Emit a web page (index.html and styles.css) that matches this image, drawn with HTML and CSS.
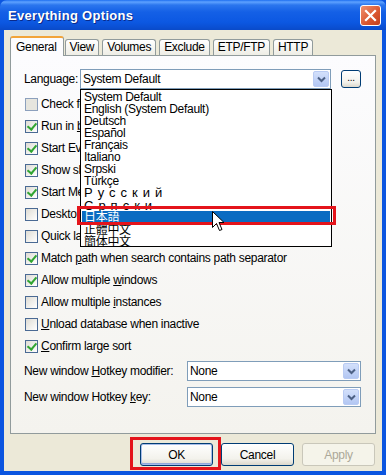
FILE: index.html
```html
<!DOCTYPE html>
<html lang="en">

<head>
    <meta charset="UTF-8">
    <meta name="viewport" content="width=device-width, initial-scale=1.0">
    <title>Everything Options</title>
    <link rel="stylesheet" href="styles.css">
</head>

<body>
    <div class="window">
        <div class="titlebar">
            <span class="title">Everything Options</span>
            <div class="close-btn">
                <svg width="13" height="13" viewBox="0 0 13 13">
                    <path d="M2 2 L11 11 M11 2 L2 11" stroke="#fff" stroke-width="2.2" stroke-linecap="square" />
                </svg>
            </div>
        </div>

        <div class="dialog">
            <div class="tabs">
                <div class="tab active">General</div>
                <div class="tab">View</div>
                <div class="tab">Volumes</div>
                <div class="tab">Exclude</div>
                <div class="tab">ETP/FTP</div>
                <div class="tab">HTTP</div>
            </div>

            <div class="panel">
                <div class="lang-row">
                    <span class="lang-label">Language:</span>
                    <div class="combo lang-combo">
                        <span class="combo-text">System Default</span>
                        <span class="combo-arrow">
                            <svg width="9" height="7" viewBox="0 0 9 7">
                                <path d="M1 1.5 L4.5 5 L8 1.5" fill="none" stroke="#4d6185" stroke-width="2" />
                            </svg>
                        </span>
                        <ul class="dropdown-list">
                            <li>System Default</li>
                            <li>English (System Default)</li>
                            <li>Deutsch</li>
                            <li>Español</li>
                            <li>Français</li>
                            <li>Italiano</li>
                            <li>Srpski</li>
                            <li>Türkçe</li>
                            <li class="wide">Русский</li>
                            <li class="wide clipped">Српски</li>
                            <li class="selected">日本語</li>
                            <li>正體中文</li>
                            <li>簡体中文</li>
                        </ul>
                    </div>
                    <div class="btn dots-btn">...</div>
                </div>

                <div class="options">
                    <div class="check-row"><span class="checkbox dim"></span><span>Check for updates on startup</span></div>
                    <div class="check-row"><span class="checkbox checked"></span><span>Run in <u>b</u>ackground</span></div>
                    <div class="check-row"><span class="checkbox checked"></span><span>Start Everything on system startup</span></div>
                    <div class="check-row"><span class="checkbox checked"></span><span>Show shortcut in tray</span></div>
                    <div class="check-row"><span class="checkbox checked"></span><span>Start Menu shortcuts</span></div>
                    <div class="check-row"><span class="checkbox"></span><span>Desktop shortcut</span></div>
                    <div class="check-row"><span class="checkbox"></span><span>Quick launch shortcut</span></div>
                    <div class="check-row"><span class="checkbox checked"></span><span>Match <u>p</u>ath when search contains path separator</span></div>
                    <div class="check-row"><span class="checkbox checked"></span><span>Allow multiple <u>w</u>indows</span></div>
                    <div class="check-row"><span class="checkbox"></span><span>Allow multiple <u>i</u>nstances</span></div>
                    <div class="check-row"><span class="checkbox"></span><span><u>U</u>nload database when inactive</span></div>
                    <div class="check-row"><span class="checkbox checked"></span><span><u>C</u>onfirm large sort</span></div>
                </div>

                <div class="hotkey-row">
                    <span class="hotkey-label">New window <u>H</u>otkey modifier:</span>
                    <div class="combo hotkey-combo">
                        <span class="combo-text">None</span>
                        <span class="combo-arrow">
                            <svg width="9" height="7" viewBox="0 0 9 7">
                                <path d="M1 1.5 L4.5 5 L8 1.5" fill="none" stroke="#4d6185" stroke-width="2" />
                            </svg>
                        </span>
                    </div>
                </div>
                <div class="hotkey-row">
                    <span class="hotkey-label">New window Hotkey <u>k</u>ey:</span>
                    <div class="combo hotkey-combo">
                        <span class="combo-text">None</span>
                        <span class="combo-arrow">
                            <svg width="9" height="7" viewBox="0 0 9 7">
                                <path d="M1 1.5 L4.5 5 L8 1.5" fill="none" stroke="#4d6185" stroke-width="2" />
                            </svg>
                        </span>
                    </div>
                </div>
            </div>

            <div class="buttons">
                <div class="btn default-btn">OK</div>
                <div class="btn">Cancel</div>
                <div class="btn disabled">Apply</div>
            </div>
        </div>

        <!-- annotation marks drawn over the screenshot -->
        <div class="mark mark-lang"></div>
        <div class="mark mark-ok"></div>
        <svg class="cursor" width="13" height="21" viewBox="0 0 13 21">
            <path d="M0.5 0.5 L0.5 16.5 L4.5 12.5 L7.5 19.5 L10 18.5 L7 11.5 L12 11.5 Z" fill="#fff" stroke="#000" stroke-width="1" />
        </svg>
    </div>
</body>

</html>
```

FILE: styles.css
```css
body {
    margin: 0;
    padding: 0;
    font-family: "Liberation Sans", "Noto Sans CJK JP", sans-serif;
    font-size: 12px;
    letter-spacing: -0.3px;
    color: #000;
}

.window {
    position: relative;
    width: 386px;
    height: 475px;
    box-sizing: border-box;
    background: #0b55e0;
    padding: 0 4px 4px 4px;
    display: flex;
    flex-direction: column;
    overflow: hidden;
}

.titlebar {
    height: 30px;
    margin: 0 -4px;
    padding: 0 5px 0 8px;
    border-radius: 7px 7px 0 0;
    background: linear-gradient(#1e6ff0 0, #5ea2ff 2px, #2b76ee 5px, #1460e6 12px, #0c58e2 22px, #0a50d4 27px, #0a4ac8 30px);
    display: flex;
    align-items: center;
    justify-content: space-between;
}

.title {
    color: #fff;
    font-weight: bold;
    font-size: 13px;
    letter-spacing: 0.3px;
    text-shadow: 1px 1px 0 #0a2a8a;
    margin-top: 1px;
}

.close-btn {
    width: 19px;
    height: 19px;
    border: 1px solid #fff;
    border-radius: 3px;
    background: linear-gradient(135deg, #f0906e, #d9552e 60%, #c2401e);
    display: flex;
    align-items: center;
    justify-content: center;
}

.dialog {
    flex: 1;
    background: #ece9d8;
    padding: 6px 6px 0 6px;
    display: flex;
    flex-direction: column;
}

.tabs {
    display: flex;
    align-items: flex-end;
    height: 19px;
}

.tab {
    height: 15px;
    padding: 0 4px;
    margin-right: 3px;
    border: 1px solid #919b9c;
    border-bottom: none;
    border-radius: 3px 3px 0 0;
    background: linear-gradient(#ffffff, #eeede5);
    line-height: 15px;
}

.tab.active {
    position: relative;
    z-index: 1;
    height: 18px;
    padding: 0 6px 0 5px;
    margin-right: 1px;
    margin-bottom: -1px;
    border-top: 2px solid #f2a43a;
    background: #fcfcfe;
    line-height: 18px;
}

.panel {
    height: 379px;
    box-sizing: border-box;
    border: 1px solid #919b9c;
    background: linear-gradient(#fcfcfe, #f4f3ee);
    padding: 13px 0 0 13px;
}

.lang-row {
    display: flex;
    align-items: center;
    height: 20px;
}

.lang-label {
    width: 56px;
}

.combo {
    position: relative;
    height: 20px;
    box-sizing: border-box;
    border: 1px solid #7f9db9;
    background: #fff;
    display: flex;
    align-items: center;
    justify-content: space-between;
    padding: 0 1px 0 2px;
}

.lang-combo {
    width: 251px;
}

.combo-arrow {
    width: 16px;
    height: 16px;
    box-sizing: border-box;
    border: 1px solid #b9cbf3;
    border-radius: 2px;
    background: linear-gradient(#d3e0fb, #b3c7f3);
    display: flex;
    align-items: center;
    justify-content: center;
}

.dropdown-list {
    position: absolute;
    z-index: 5;
    top: 19px;
    left: -1px;
    width: 252px;
    height: 158px;
    box-sizing: border-box;
    margin: 0;
    padding: 1px 1px 0 1px;
    list-style: none;
    border: 1px solid #000;
    background: #fff;
}

.dropdown-list li {
    height: 12px;
    line-height: 12px;
    padding-left: 2px;
    white-space: nowrap;
}

.dropdown-list li.wide {
    letter-spacing: 5px;
    font-size: 13px;
}

.dropdown-list li.clipped {
    box-sizing: border-box;
    padding-top: 1px;
    overflow: hidden;
}

.dropdown-list li.selected {
    height: 13px;
    background: #0a6cc2;
    color: #fff;
}

.btn {
    box-sizing: border-box;
    border: 1px solid #003c74;
    border-radius: 3px;
    background: linear-gradient(#ffffff, #f3f2ec 70%, #dcd8cc);
    display: flex;
    align-items: center;
    justify-content: center;
}

.dots-btn {
    width: 20px;
    height: 18px;
    margin-left: 10px;
    font-size: 10px;
    line-height: 1;
    padding-bottom: 2px;
}

.options {
    margin-top: 4px;
}

.check-row {
    height: 22px;
    display: flex;
    align-items: center;
    white-space: nowrap;
    padding-left: 1px;
}

.checkbox {
    width: 13px;
    height: 13px;
    box-sizing: border-box;
    border: 1px solid #4a6a94;
    background: linear-gradient(135deg, #dedcd4, #ffffff);
    margin-right: 3px;
    flex-shrink: 0;
    display: flex;
    align-items: center;
    justify-content: center;
}

.checkbox.dim {
    background: #e6e5de;
    border-color: #8ca0bd;
}

.checkbox.checked::after {
    content: "";
    width: 4px;
    height: 7px;
    margin-top: -2px;
    border-right: 2px solid #31a532;
    border-bottom: 2px solid #31a532;
    transform: rotate(40deg);
}

.hotkey-row {
    display: flex;
    align-items: center;
    height: 20px;
    margin-top: 4px;
}

.hotkey-row + .hotkey-row {
    margin-top: 6px;
}

.hotkey-label {
    width: 163px;
}

.hotkey-combo {
    width: 174px;
}

.buttons {
    display: flex;
    justify-content: flex-end;
    gap: 8px;
    margin-top: 9px;
    margin-right: 1px;
}

.buttons .btn {
    width: 73px;
    height: 23px;
}

.default-btn {
    box-shadow: inset 0 0 0 1px #a8bde9, inset 0 -1px 0 1px #91a7dc;
}

.btn.disabled {
    border-color: #c9c7ba;
    background: #f5f4ea;
    color: #aca899;
}

.mark {
    position: absolute;
    border: 3px solid #e4141b;
    box-sizing: border-box;
}

.mark-lang {
    left: 77px;
    top: 206px;
    width: 259px;
    height: 19px;
    z-index: 6;
}

.mark-ok {
    left: 130px;
    top: 437px;
    width: 91px;
    height: 33px;
}

.cursor {
    position: absolute;
    left: 212px;
    top: 211px;
    z-index: 7;
}
```
